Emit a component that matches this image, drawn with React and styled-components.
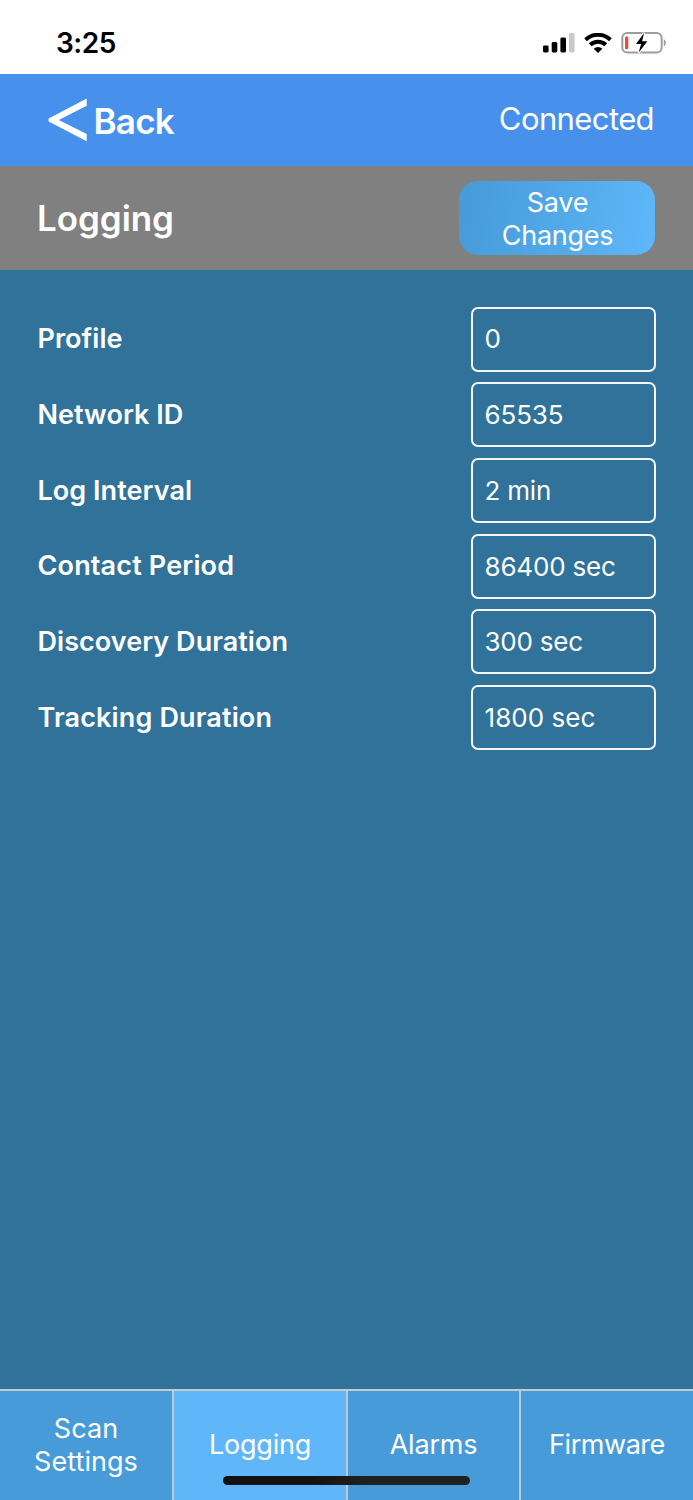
import React, { useState } from "react";
import styled, { createGlobalStyle } from "styled-components";

const settings = [
  { label: "Profile", value: "0", labelSpacing: 0.04 },
  { label: "Network ID", value: "65535", labelSpacing: 0.04, valueSpacing: -0.15 },
  { label: "Log Interval", value: "2 min", labelSpacing: 0.05, valueSpacing: -0.2 },
  { label: "Contact Period", value: "86400 sec", labelSpacing: 0.15, valueSpacing: -0.18 },
  { label: "Discovery Duration", value: "300 sec", labelSpacing: 0.04, valueSpacing: -0.22 },
  { label: "Tracking Duration", value: "1800 sec", labelSpacing: 0.14, valueSpacing: 0.05 },
];

const tabs = [
  { name: "Scan Settings", spacing: 0.05 },
  { name: "Logging", spacing: -0.25 },
  { name: "Alarms", spacing: -0.2 },
  { name: "Firmware", spacing: -0.45 },
];

const SignalIcon = () => (
  <svg width="32" height="20" viewBox="0 0 32 20">
    <rect x="0" y="12.6" width="5.6" height="6.9" rx="1.4" fill="#000" />
    <rect x="8.7" y="9" width="5.6" height="10.5" rx="1.4" fill="#000" />
    <rect x="17.4" y="4.6" width="5.6" height="14.9" rx="1.4" fill="#000" />
    <rect x="26" y="0" width="5.6" height="19.5" rx="1.4" fill="#c9c9c9" />
  </svg>
);

const WifiIcon = () => (
  <svg width="28" height="20" viewBox="0 0 28 20">
    <g fill="none" stroke="#000" strokeWidth="4">
      <path d="M1.6 6.8 A18 18 0 0 1 26.4 6.8" />
      <path d="M6.2 11.8 A11.2 11.2 0 0 1 21.8 11.8" />
    </g>
    <path d="M14 20 L9.7 15.7 A6.2 6.2 0 0 1 18.3 15.7 Z" fill="#000" />
  </svg>
);

const BatteryIcon = () => (
  <svg width="46" height="22" viewBox="0 0 46 22">
    <rect x="1.3" y="1" width="39.4" height="19.4" rx="5" fill="none" stroke="#9c9c9c" strokeWidth="2" />
    <path d="M42.8 7.2 C45.6 8.6 45.6 12.8 42.8 14.2 Z" fill="#9c9c9c" />
    <rect x="4" y="4.4" width="3.3" height="12.8" rx="1.2" fill="#ee4b3e" />
    <path
      d="M23.1 1 L15 11.9 H20.1 L17.7 20.6 L26.4 9.3 H21.1 Z"
      fill="#000"
      stroke="#fff"
      strokeWidth="2.6"
      paintOrder="stroke"
    />
  </svg>
);

const BackIcon = () => (
  <svg width="39" height="44" viewBox="0 0 39 44">
    <path d="M38.7 0.6 V7.8 L10.8 22 L38.7 36 V43.2 L0.6 23.5 V20.4 Z" fill="#fff" />
  </svg>
);

const App = () => {
  const [active, setActive] = useState("Logging");

  return (
    <>
      <GlobalStyle />
      <Screen>
        <StatusBar>
          <Time>3:25</Time>
          <StatusIcons>
            <SignalIcon />
            <WifiIcon />
            <BatteryIcon />
          </StatusIcons>
        </StatusBar>

        <Header>
          <BackButton>
            <BackIcon />
            <span>Back</span>
          </BackButton>
          <Connection>Connected</Connection>
        </Header>

        <TitleBar>
          <Title>Logging</Title>
          <SaveButton>Save Changes</SaveButton>
        </TitleBar>

        <Settings>
          {settings.map((item) => (
            <Row key={item.label}>
              <Label $spacing={item.labelSpacing}>{item.label}</Label>
              <Value $spacing={item.valueSpacing}>{item.value}</Value>
            </Row>
          ))}
        </Settings>

        <TabBar>
          {tabs.map((tab) => (
            <Tab
              key={tab.name}
              $active={tab.name === active}
              $spacing={tab.spacing}
              onClick={() => setActive(tab.name)}
            >
              {tab.name}
            </Tab>
          ))}
          <HomeIndicator />
        </TabBar>
      </Screen>
    </>
  );
};

const GlobalStyle = createGlobalStyle`
  * {
    box-sizing: border-box;
  }

  body {
    margin: 0;
    font-family: Inter, "Liberation Sans", sans-serif;
  }

  svg {
    display: block;
    flex: none;
  }

  button {
    font-family: inherit;
    border: none;
    margin: 0;
    padding: 0;
    color: #fff;
  }
`;

const Screen = styled.div`
  width: 693px;
  height: 1500px;
  display: flex;
  flex-direction: column;
  background: #307299;
  color: #fff;
  overflow: hidden;
`;

const StatusBar = styled.div`
  height: 74px;
  display: flex;
  justify-content: space-between;
  align-items: center;
  padding: 11px 26px 0 56px;
  background: #fff;
`;

const Time = styled.div`
  color: #000;
  font-size: 28px;
  font-weight: 600;
  letter-spacing: -0.5px;
`;

const StatusIcons = styled.div`
  display: flex;
  align-items: center;
  gap: 9px;
`;

const Header = styled.header`
  height: 92px;
  display: flex;
  justify-content: space-between;
  align-items: center;
  padding: 0 39px 0 48px;
  background: #4791ec;
`;

const BackButton = styled.button`
  display: flex;
  align-items: center;
  gap: 6.5px;
  background: none;
  font-size: 35px;
  font-weight: 600;
  letter-spacing: -0.75px;

  span {
    padding-top: 1px;
  }
`;

const Connection = styled.div`
  font-size: 31px;
  font-weight: 400;
  letter-spacing: -0.6px;
  padding-bottom: 3px;
`;

const TitleBar = styled.div`
  height: 104px;
  display: flex;
  justify-content: space-between;
  align-items: center;
  padding: 0 38px 0 37px;
  background: #808080;
`;

const Title = styled.h1`
  margin: 0;
  font-size: 35px;
  font-weight: 600;
  letter-spacing: -0.06px;
`;

const SaveButton = styled.button`
  width: 196px;
  height: 74px;
  padding: 3px 29px 0 30px;
  border-radius: 19px;
  background: linear-gradient(100deg, #479bd9 5%, #5db6f8 95%);
  font-size: 27px;
  font-weight: 400;
  line-height: 32.5px;
  letter-spacing: -0.25px;
`;

const Settings = styled.div`
  flex: 1;
  display: flex;
  flex-direction: column;
  gap: 10.72px;
  padding: 36.55px 37px 0 37.5px;
`;

const Row = styled.div`
  display: flex;
  justify-content: space-between;
  align-items: center;
`;

const Label = styled.label`
  font-size: 27px;
  font-weight: 600;
  letter-spacing: ${(props) => props.$spacing || 0}px;
  padding-bottom: 0.6px;
`;

const Value = styled.div`
  width: 185px;
  height: 65px;
  display: flex;
  align-items: center;
  padding: 0 0 0.4px 11.5px;
  border: 2px solid #f4f7f9;
  border-radius: 7px;
  font-size: 26px;
  letter-spacing: ${(props) => props.$spacing || 0}px;
`;

const TabBar = styled.nav`
  position: relative;
  height: 111px;
  display: grid;
  grid-template-columns: 174px 174px 173px 172px;
  border-top: 2px solid #c3cbd0;
`;

const Tab = styled.button`
  padding: 0 20px;
  background: ${(props) => (props.$active ? "#5fb6f9" : "#479bd9")};
  font-size: 27px;
  font-weight: 400;
  line-height: 32.5px;
  letter-spacing: ${(props) => props.$spacing}px;

  &:not(:nth-child(4)) {
    border-right: 2px solid #c3cbd0;
  }
`;

/* floats over the tabs */
const HomeIndicator = styled.div`
  position: absolute;
  left: 223px;
  bottom: 15px;
  width: 247px;
  height: 9px;
  border-radius: 5px;
  background: linear-gradient(90deg, #121212 35%, #222 60%);
`;

export default App;
